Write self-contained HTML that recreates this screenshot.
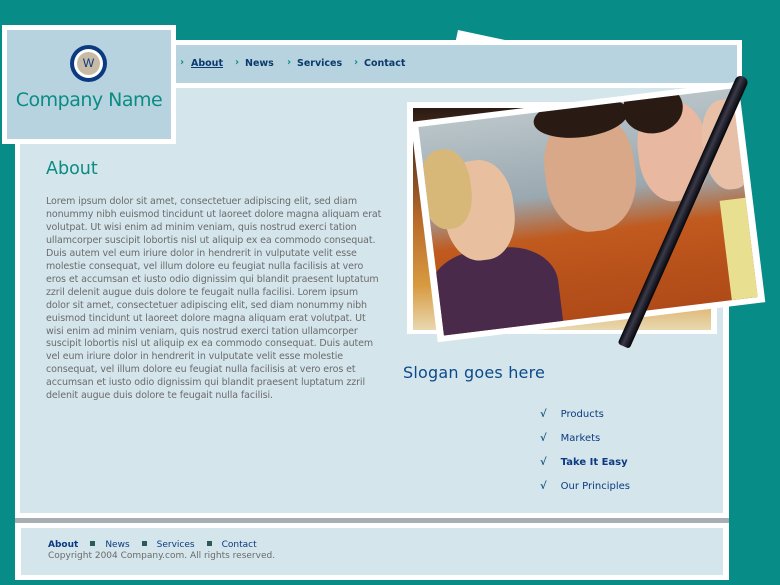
<!DOCTYPE html>
<html><head><meta charset="utf-8"><style>
*{margin:0;padding:0}
body{width:780px;height:585px;background:#088C87;position:relative;overflow:hidden;font-family:"DejaVu Sans",sans-serif}
.a{position:absolute}
.n{position:absolute;top:58px;font-size:9.5px;font-weight:bold;color:#0B3A6E;white-space:nowrap}
.ar{position:absolute;top:57px;font-size:10px;font-weight:bold;color:#088C87}
.t div{white-space:nowrap}
</style></head><body>
<!-- back photo peeking above -->
<div class="a" style="left:458px;top:30px;width:60px;height:30px;background:#fff;transform:rotate(12deg);transform-origin:0 0"></div>
<!-- main white panel -->
<div class="a" style="left:15px;top:40px;width:714px;height:478px;background:#fff"></div>
<div class="a" style="left:20px;top:88px;width:703px;height:425px;background:#D4E5EC"></div>
<!-- nav -->
<div class="a" style="left:176px;top:40px;width:566px;height:48px;background:#fff"></div>
<div class="a" style="left:176px;top:45px;width:561px;height:38px;background:#B7D3DF"></div>
<span class="ar" style="left:180px">›</span><u class="n" style="left:191px">About</u>
<span class="ar" style="left:235px">›</span><span class="n" style="left:245px">News</span>
<span class="ar" style="left:287px">›</span><span class="n" style="left:297px">Services</span>
<span class="ar" style="left:354px">›</span><span class="n" style="left:364px">Contact</span>
<!-- logo box -->
<div class="a" style="left:2px;top:25px;width:174px;height:119px;background:#fff"></div>
<div class="a" style="left:7px;top:30px;width:164px;height:109px;background:#B7D3DF"></div>
<div class="a" style="left:70px;top:45px;width:37px;height:37px;border-radius:50%;background:#0B3A80"></div>
<div class="a" style="left:74px;top:49px;width:29px;height:29px;border-radius:50%;background:#fff"></div>
<div class="a" style="left:77px;top:52px;width:23px;height:23px;border-radius:50%;background:#C8BBA6;color:#0B3A80;font-size:12px;text-align:center;line-height:23px;font-family:'Liberation Sans',sans-serif">W</div>
<div class="a" style="left:7px;top:89px;width:164px;text-align:center;font-size:19px;color:#0A8C84;letter-spacing:-0.5px">Company Name</div>
<!-- about -->
<div class="a" style="left:46px;top:159px;font-size:17.5px;color:#0A8C84">About</div>
<div class="a t" style="left:46px;top:196px;font-size:9.5px;line-height:12.95px;color:#6B6B6B;letter-spacing:-0.1px">
<div>Lorem ipsum dolor sit amet, consectetuer adipiscing elit, sed diam</div>
<div>nonummy nibh euismod tincidunt ut laoreet dolore magna aliquam erat</div>
<div>volutpat. Ut wisi enim ad minim veniam, quis nostrud exerci tation</div>
<div>ullamcorper suscipit lobortis nisl ut aliquip ex ea commodo consequat.</div>
<div>Duis autem vel eum iriure dolor in hendrerit in vulputate velit esse</div>
<div>molestie consequat, vel illum dolore eu feugiat nulla facilisis at vero</div>
<div>eros et accumsan et iusto odio dignissim qui blandit praesent luptatum</div>
<div>zzril delenit augue duis dolore te feugait nulla facilisi. Lorem ipsum</div>
<div>dolor sit amet, consectetuer adipiscing elit, sed diam nonummy nibh</div>
<div>euismod tincidunt ut laoreet dolore magna aliquam erat volutpat. Ut</div>
<div>wisi enim ad minim veniam, quis nostrud exerci tation ullamcorper</div>
<div>suscipit lobortis nisl ut aliquip ex ea commodo consequat. Duis autem</div>
<div>vel eum iriure dolor in hendrerit in vulputate velit esse molestie</div>
<div>consequat, vel illum dolore eu feugiat nulla facilisis at vero eros et</div>
<div>accumsan et iusto odio dignissim qui blandit praesent luptatum zzril</div>
<div>delenit augue duis dolore te feugait nulla facilisi.</div>
</div>
<!-- back photo -->
<div class="a" style="left:407px;top:102px;width:310px;height:232px;background:#fff"></div>
<div class="a" style="left:413px;top:108px;width:298px;height:222px;background:linear-gradient(180deg,#2a1a14,#b86a2a 50%,#d89a40 80%,#e8d8b0)"></div>
<!-- front photo -->
<div class="a" style="left:423px;top:101px;width:330px;height:222px;background:#fff;transform:rotate(-7deg);transform-origin:50% 50%"></div>
<div class="a" style="left:430px;top:107px;width:316px;height:210px;transform:rotate(-7deg);transform-origin:50% 50%;overflow:hidden;background:linear-gradient(180deg,#b8c4c8,#9aa8b0 40%,#c05a1e 60%,#b04a18)">
 <div class="a" style="left:-10px;top:130px;width:130px;height:100px;background:#4a2a4a;border-radius:40% 40% 0 0"></div>
 <div class="a" style="left:15px;top:40px;width:70px;height:100px;background:#e8c0a0;border-radius:45%"></div>
 <div class="a" style="left:-5px;top:25px;width:50px;height:80px;background:#d8b878;border-radius:45%"></div>
 <div class="a" style="left:120px;top:5px;width:90px;height:120px;background:#d8a888;border-radius:45%"></div>
 <div class="a" style="left:115px;top:-10px;width:95px;height:40px;background:#2a1a14;border-radius:50%"></div>
 <div class="a" style="left:215px;top:5px;width:70px;height:100px;background:#e8b8a0;border-radius:45%"></div>
 <div class="a" style="left:205px;top:-15px;width:60px;height:50px;background:#2a1a14;border-radius:50%"></div>
 <div class="a" style="left:280px;top:10px;width:50px;height:90px;background:#e8c0a8;border-radius:45%"></div>
 <div class="a" style="left:290px;top:110px;width:40px;height:100px;background:#e8e090"></div>
</div>
<!-- pen -->
<div class="a" style="left:677px;top:64px;width:13px;height:295px;background:linear-gradient(90deg,#05050a,#3a3a4a 40%,#05050a);transform:rotate(24deg);transform-origin:50% 50%;border-radius:6px 6px 3px 3px"></div>
<!-- slogan -->
<div class="a" style="left:403px;top:363px;font-size:16px;color:#0B4A8A;font-family:'DejaVu Sans',sans-serif;letter-spacing:0.2px">Slogan goes here</div>
<div class="a" style="left:540px;top:403px;font-size:10px;color:#0B3A80;line-height:24px">
<div><span style="color:#1a5a80;font-weight:bold;margin-right:14px">√</span>Products</div>
<div><span style="color:#1a5a80;font-weight:bold;margin-right:14px">√</span>Markets</div>
<div><span style="color:#1a5a80;font-weight:bold;margin-right:14px">√</span><b>Take It Easy</b></div>
<div><span style="color:#1a5a80;font-weight:bold;margin-right:14px">√</span>Our Principles</div>
</div>
<!-- footer -->
<div class="a" style="left:15px;top:518px;width:714px;height:5px;background:#A7AEB4"></div>
<div class="a" style="left:15px;top:523px;width:714px;height:57px;background:#fff"></div>
<div class="a" style="left:21px;top:528px;width:702px;height:47px;background:#D4E5EC"></div>
<div class="a" style="left:48px;top:540px;font-size:9px;color:#0B3A80;white-space:nowrap"><b>About</b><span style="display:inline-block;width:5px;height:5px;background:#2a5a5a;margin:0 10px 1px 12px"></span>News<span style="display:inline-block;width:5px;height:5px;background:#2a5a5a;margin:0 10px 1px 12px"></span>Services<span style="display:inline-block;width:5px;height:5px;background:#2a5a5a;margin:0 10px 1px 12px"></span>Contact</div>
<div class="a" style="left:48px;top:551px;font-size:9px;color:#6B6B6B">Copyright 2004 Company.com. All rights reserved.</div>
</body></html>
